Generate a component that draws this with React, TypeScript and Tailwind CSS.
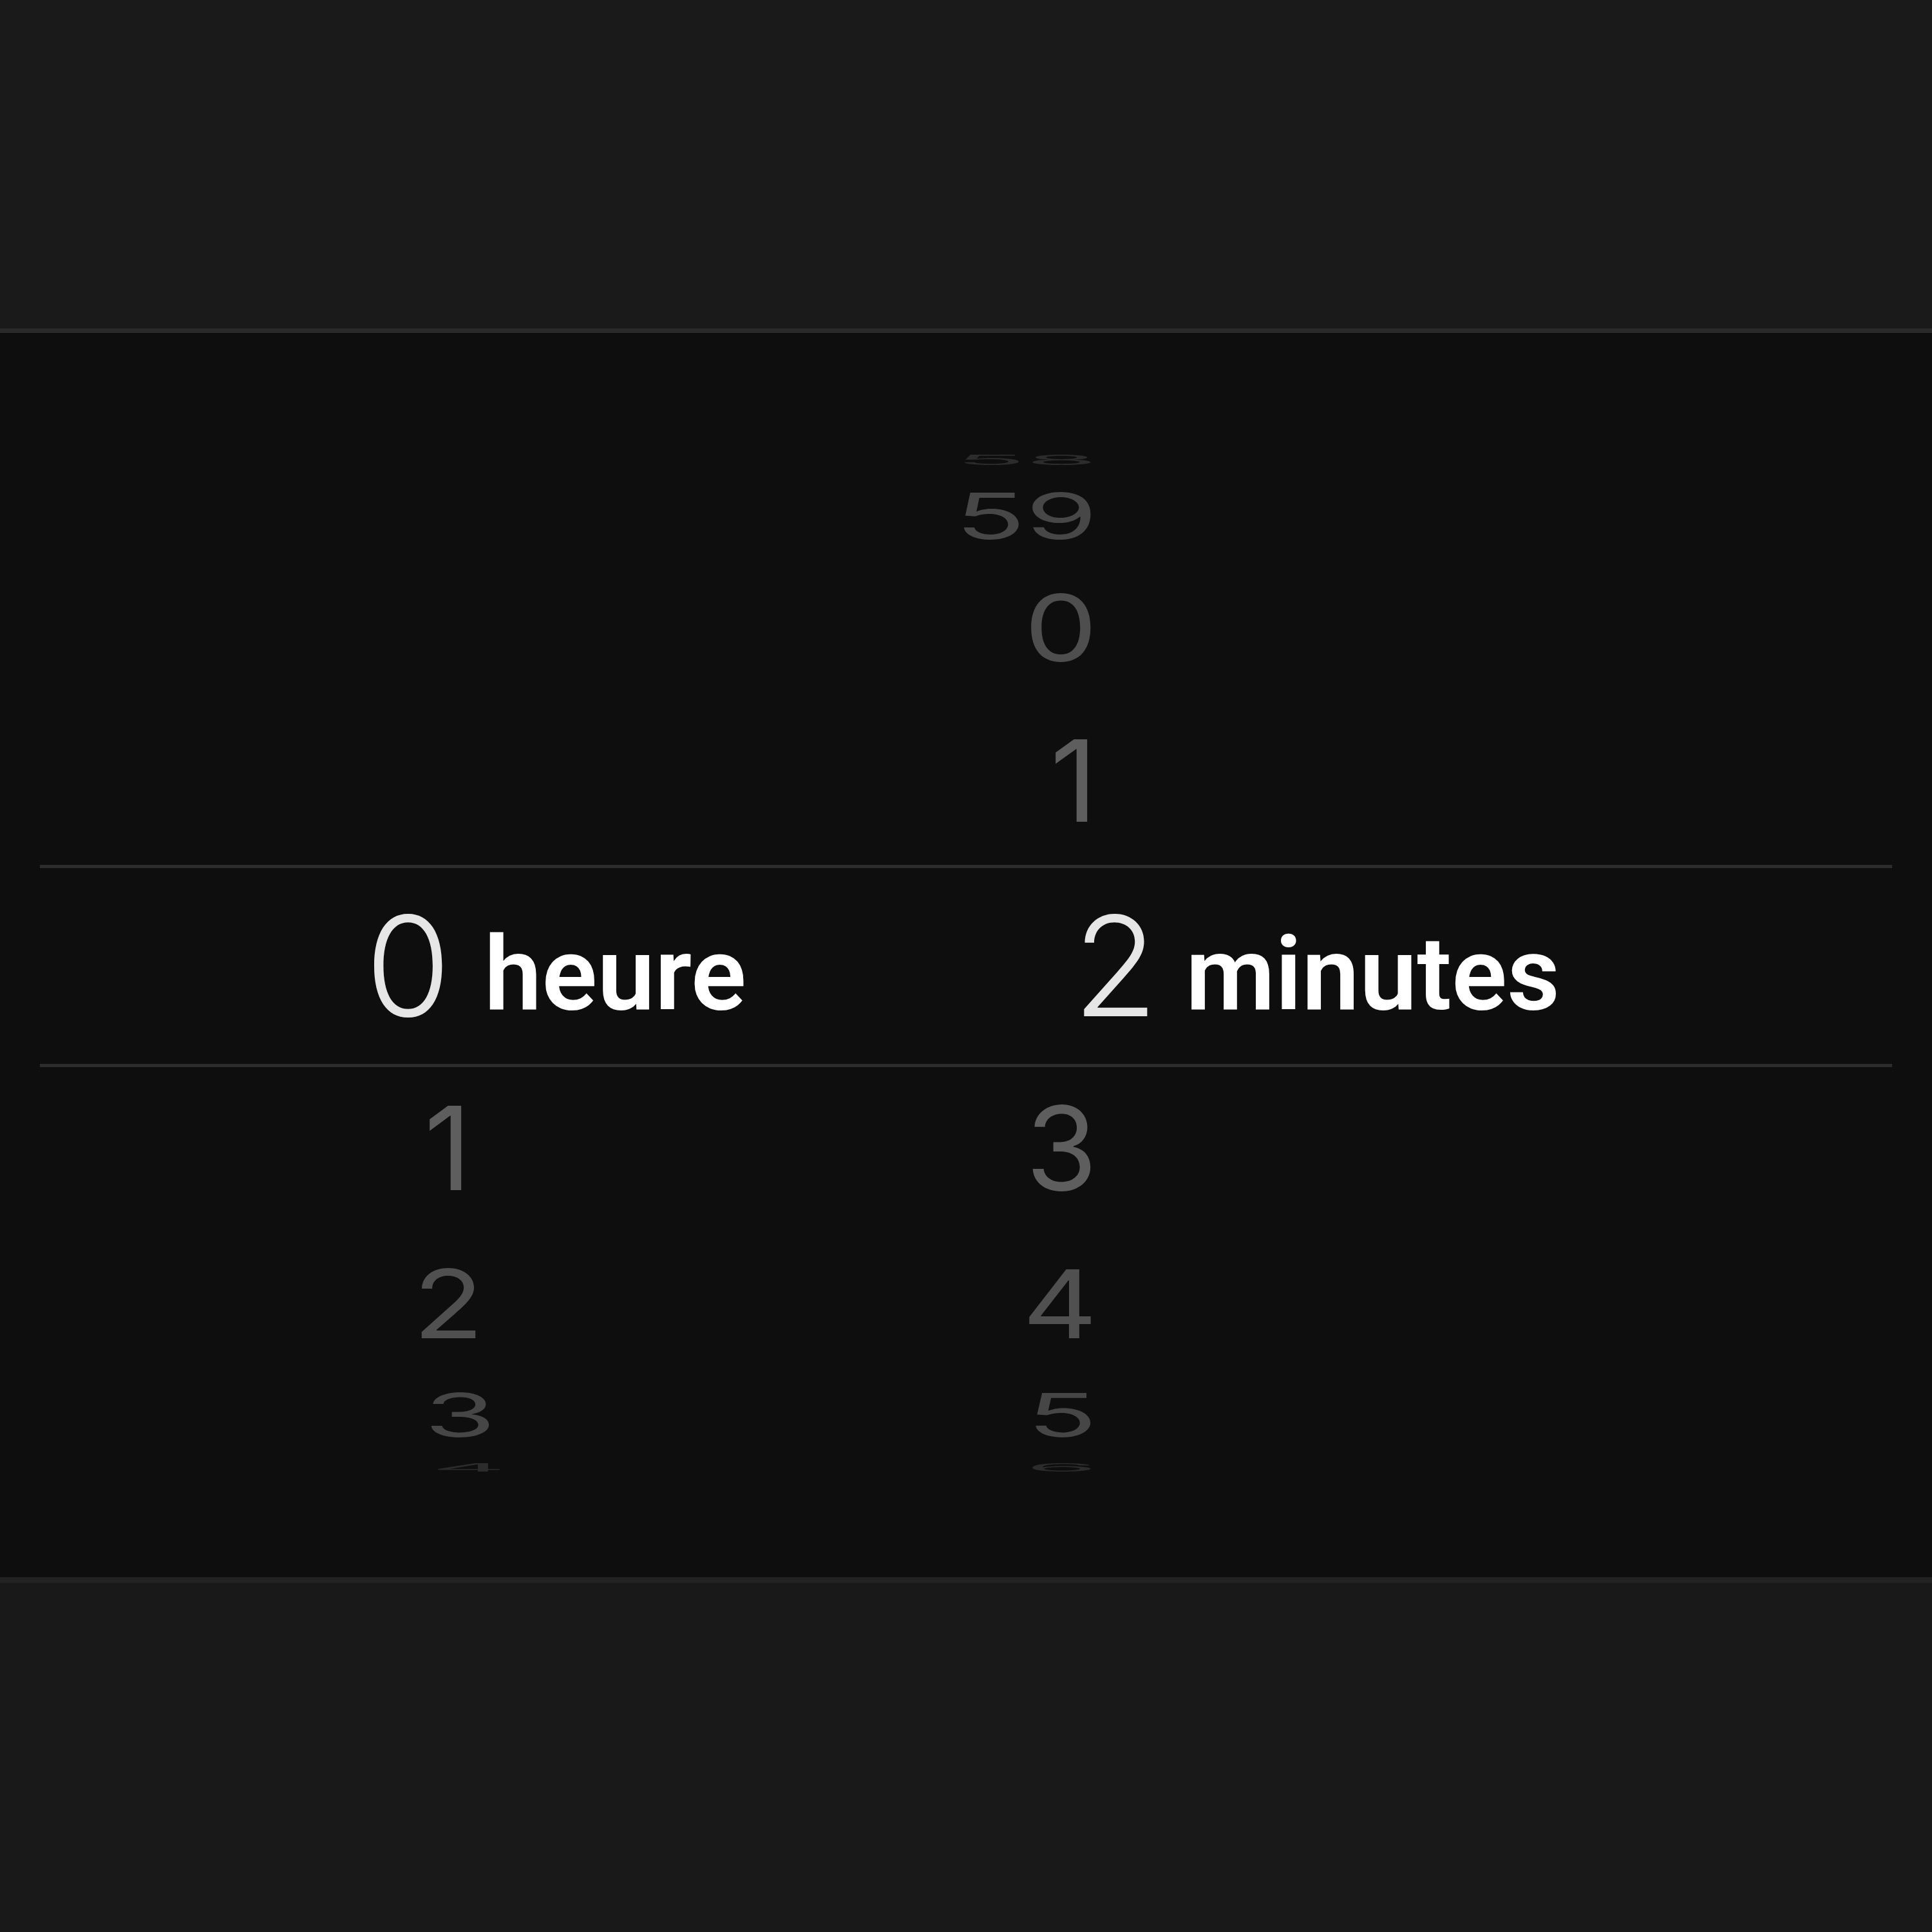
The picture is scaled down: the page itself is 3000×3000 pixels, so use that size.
const upperRows = [
  { minute: '58', slot: 'h-[38px]', scale: 'scale-y-[0.12]', color: 'text-[#2c2c2c]' },
  { minute: '59', slot: 'h-[136px]', scale: 'scale-y-[0.55]', color: 'text-[#474747]' },
  { minute: '0', slot: 'h-[212px]', scale: 'scale-y-[0.8]', color: 'text-[#4e4e4e]' },
  { minute: '1', slot: 'h-[262px]', scale: 'scale-y-[0.98]', color: 'text-[#5e5e5e]' },
];

const lowerRows = [
  { hour: '1', minute: '3', slot: 'h-[252px]', scale: 'scale-y-[1]', color: 'text-[#5e5e5e]', shift: 'translate-x-[0px]' },
  { hour: '2', minute: '4', slot: 'h-[232px]', scale: 'scale-y-[0.82]', color: 'text-[#505050]', shift: 'translate-x-[19px]' },
  { hour: '3', minute: '5', slot: 'h-[112px]', scale: 'scale-y-[0.52]', color: 'text-[#464646]', shift: 'translate-x-[38px]' },
  { hour: '4', minute: '6', slot: 'h-[50px]', scale: 'scale-y-[0.1]', color: 'text-[#2c2c2c]', shift: 'translate-x-[54px]' },
];

const digitFont = { fontFamily: 'Inter, "Liberation Sans", sans-serif' };
const labelFont = { fontFamily: 'Roboto, "Liberation Sans", sans-serif' };

function WheelRow({
  hour,
  minute,
  slot,
  scale,
  color,
  shift,
}: {
  hour?: string;
  minute: string;
  slot: string;
  scale: string;
  color: string;
  shift?: string;
}) {
  return (
    <div className={`flex ${slot} items-center overflow-visible`}>
      <div className={`w-[732px] text-right text-[180px] leading-none ${color} ${scale} ${shift ?? ''}`} style={digitFont}>
        {hour ?? ''}
      </div>
      <div className={`w-[972px] text-right text-[180px] leading-none ${color} ${scale}`} style={digitFont}>
        {minute}
      </div>
    </div>
  );
}

export default function App() {
  return (
    <div className="flex h-[3000px] w-[3000px] flex-col bg-[#1a1a1a]">
      {/* Header area */}
      <div className="h-[510px] bg-[#1a1a1a]" />
      <div className="h-[7px] bg-[#2a2a2a]" />

      {/* Countdown wheel */}
      <div className="flex flex-1 flex-col overflow-hidden bg-[#0e0e0e]">
        <div className="flex h-[826px] flex-col justify-end">
          {upperRows.map((row) => (
            <WheelRow key={row.minute} {...row} />
          ))}
        </div>

        {/* Selection band */}
        <div className="mx-[62px] h-[5px] bg-[#2c2c2c]" />
        <div className="flex h-[304px] items-center">
          <div className="w-[700px] text-right text-[215px] font-light leading-none text-[#e6e6e6]" style={digitFont}>
            0
          </div>
          <div className="w-[966px] pl-[52px] pt-[26px] text-[160px] font-semibold leading-none text-white" style={labelFont}>
            heure
          </div>
          <div className="text-[215px] font-light leading-none text-[#e6e6e6]" style={digitFont}>
            2
          </div>
          <div className="pl-[43px] pt-[26px] text-[160px] font-semibold leading-none text-white" style={labelFont}>
            minutes
          </div>
        </div>
        <div className="mx-[62px] h-[5px] bg-[#2c2c2c]" />

        <div className="flex flex-1 flex-col justify-start">
          {lowerRows.map((row) => (
            <WheelRow key={row.minute} {...row} />
          ))}
        </div>
      </div>

      {/* Footer area */}
      <div className="h-[9px] bg-[#222222]" />
      <div className="h-[542px] bg-[#191919]" />
    </div>
  );
}
